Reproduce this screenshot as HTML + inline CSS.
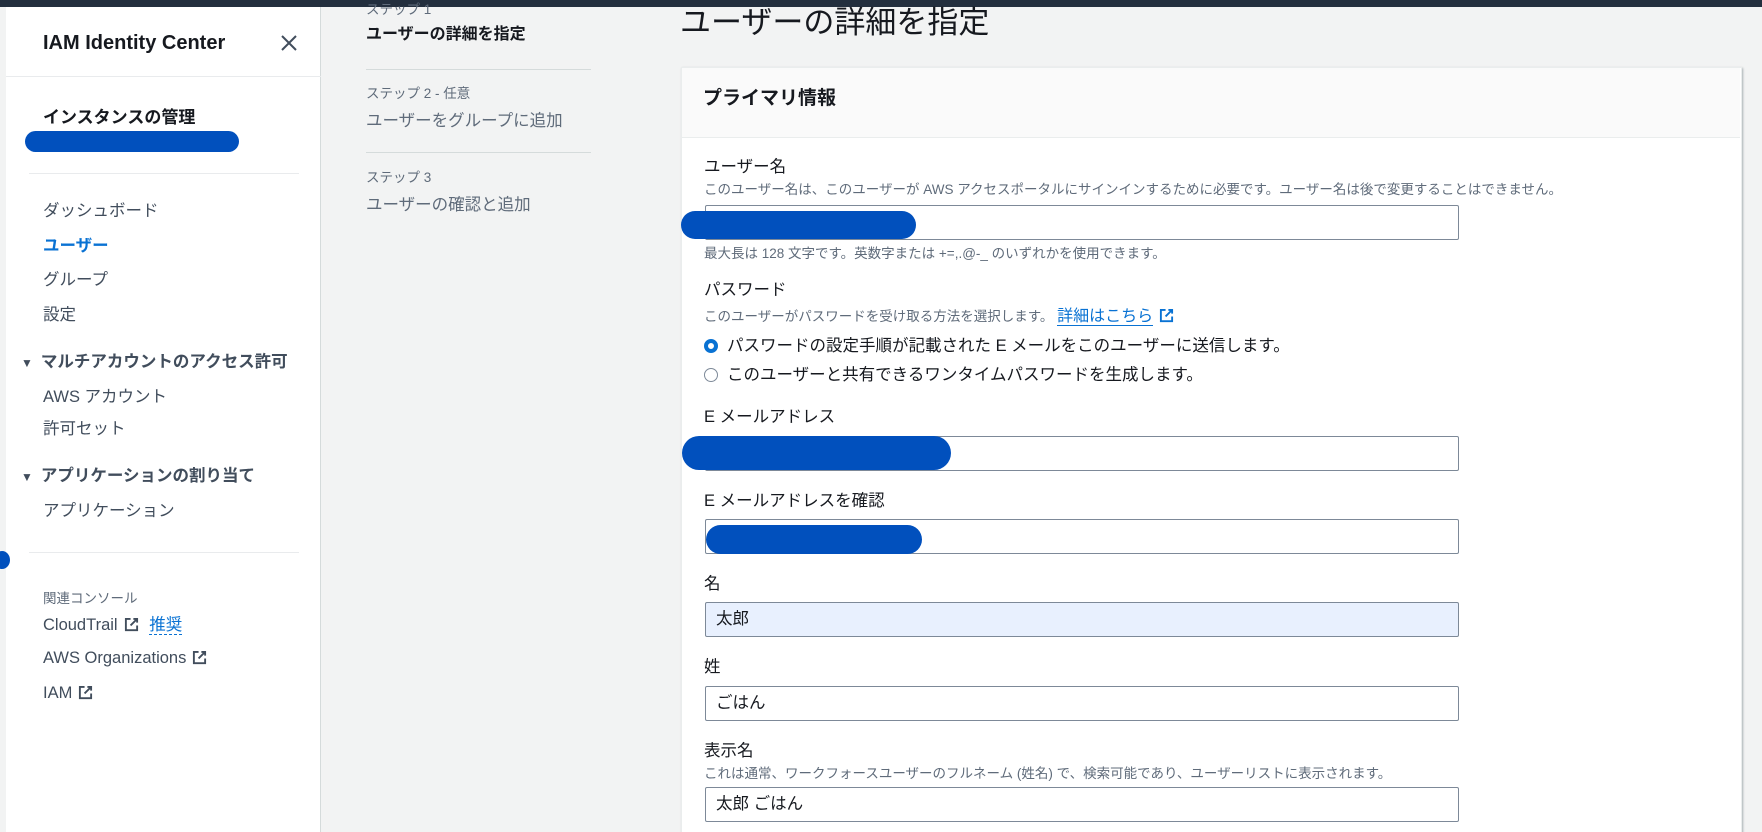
<!DOCTYPE html>
<html><head><meta charset="utf-8"><style>
*{margin:0;padding:0;box-sizing:border-box}
html,body{width:1762px;height:832px;overflow:hidden}
body{background:#f2f3f3;font-family:"Liberation Sans","Noto Sans CJK JP",sans-serif;color:#16191f}
#w{position:relative;width:1762px;height:832px;overflow:hidden}
.a{position:absolute;white-space:nowrap;line-height:20px}
.t{font-size:16.5px}
.s{font-size:13.5px;color:#5f6b7a}
.b{font-weight:bold}
.gray{color:#5f6b7a}
.hr{position:absolute;height:1px;background:#e9ebed}
.inp{position:absolute;left:705px;width:754px;height:35px;border:1px solid #7d8998;border-radius:2px;background:#fff;font-size:16.5px;padding:0 10px;line-height:33px}
.blob{position:absolute;background:#0150bd;border-radius:20px}
.ext{display:inline-block;vertical-align:-2px;margin-left:6px}
</style></head><body><div id="w">
<div style="position:absolute;left:0;top:0;width:1762px;height:7px;background:#232f3e"></div>
<div style="position:absolute;left:0;top:7px;width:6px;height:825px;background:#f2f3f3"></div>
<div style="position:absolute;left:6px;top:7px;width:315px;height:825px;background:#fff;border-right:1px solid #d5dbdb"></div>
<div class="a b" style="left:43px;top:33px;font-size:20px;line-height:20px">IAM Identity Center</div>
<svg class="a" style="left:280px;top:34px" width="18" height="18" viewBox="0 0 18 18"><path d="M2 2L16 16M16 2L2 16" stroke="#414d5c" stroke-width="2"/></svg>
<div class="hr" style="left:6px;top:76px;width:315px"></div>
<div class="a b" style="left:43px;top:108px;font-size:17px">インスタンスの管理</div>
<div class="blob" style="left:25px;top:131px;width:214px;height:21px"></div>
<div class="hr" style="left:29px;top:173px;width:270px"></div>
<div class="a t gray" style="left:43px;top:201px;color:#414d5c">ダッシュボード</div>
<div class="a t b" style="left:43px;top:236px;color:#0972d3">ユーザー</div>
<div class="a t" style="left:43px;top:270px;color:#414d5c">グループ</div>
<div class="a t" style="left:43px;top:305px;color:#414d5c">設定</div>
<div class="a b" style="left:21px;top:352px;font-size:16.5px;color:#414d5c"><span style="font-size:12px;margin-right:8px">▼</span>マルチアカウントのアクセス許可</div>
<div class="a t" style="left:43px;top:387px;color:#414d5c">AWS アカウント</div>
<div class="a t" style="left:43px;top:419px;color:#414d5c">許可セット</div>
<div class="a b" style="left:21px;top:466px;font-size:16.5px;color:#414d5c"><span style="font-size:12px;margin-right:8px">▼</span>アプリケーションの割り当て</div>
<div class="a t" style="left:43px;top:501px;color:#414d5c">アプリケーション</div>
<div class="hr" style="left:29px;top:552px;width:270px"></div>
<div style="position:absolute;left:-6px;top:551px;width:16px;height:18px;border-radius:50%;background:#0150bd"></div>
<div class="a s" style="left:43px;top:589px">関連コンソール</div>
<div class="a t" style="left:43px;top:615px;color:#414d5c">CloudTrail<svg class="ext" width="15" height="15" viewBox="0 0 16 16"><path d="M7 2H2v12h12V9M10 2h4v4M14 2L7 9" fill="none" stroke="#414d5c" stroke-width="2"/></svg> <span style="color:#0972d3;border-bottom:1px dashed #0972d3;margin-left:6px">推奨</span></div>
<div class="a t" style="left:43px;top:648px;color:#414d5c">AWS Organizations<svg class="ext" width="15" height="15" viewBox="0 0 16 16"><path d="M7 2H2v12h12V9M10 2h4v4M14 2L7 9" fill="none" stroke="#414d5c" stroke-width="2"/></svg></div>
<div class="a t" style="left:43px;top:683px;color:#414d5c">IAM<svg class="ext" width="15" height="15" viewBox="0 0 16 16"><path d="M7 2H2v12h12V9M10 2h4v4M14 2L7 9" fill="none" stroke="#414d5c" stroke-width="2"/></svg></div>

<div class="a s" style="left:366px;top:0px">ステップ 1</div>
<div class="a b" style="left:366px;top:25px;font-size:16px">ユーザーの詳細を指定</div>
<div class="hr" style="left:366px;top:69px;width:225px;background:#d5dbdb"></div>
<div class="a s" style="left:366px;top:84px">ステップ 2 - 任意</div>
<div class="a t" style="left:366px;top:111px;color:#5f6b7a">ユーザーをグループに追加</div>
<div class="hr" style="left:366px;top:152px;width:225px;background:#d5dbdb"></div>
<div class="a s" style="left:366px;top:168px">ステップ 3</div>
<div class="a t" style="left:366px;top:195px;color:#5f6b7a">ユーザーの確認と追加</div>

<div class="a" style="left:680px;top:4px;font-size:31px;line-height:38px">ユーザーの詳細を指定</div>
<div style="position:absolute;left:681px;top:67px;width:1061px;height:800px;background:#fff;border:1px solid #eaeded;box-shadow:1px 1px 2px rgba(0,28,36,.3)"></div>
<div style="position:absolute;left:682px;top:68px;width:1058px;height:70px;background:#fafafa;border-bottom:1px solid #eaeded"></div>
<div class="a b" style="left:703px;top:89px;font-size:19px">プライマリ情報</div>

<div class="a t" style="left:704px;top:157px">ユーザー名</div>
<div class="a s" style="left:704px;top:180px">このユーザー名は、このユーザーが AWS アクセスポータルにサインインするために必要です。ユーザー名は後で変更することはできません。</div>
<div class="inp" style="top:205px"></div>
<div class="blob" style="left:681px;top:211px;width:235px;height:28px"></div>
<div class="a s" style="left:704px;top:244px">最大長は 128 文字です。英数字または +=,.@-_ のいずれかを使用できます。</div>

<div class="a t" style="left:704px;top:280px">パスワード</div>
<div class="a s" style="left:704px;top:307px">このユーザーがパスワードを受け取る方法を選択します。 <span style="color:#0972d3;font-size:16px;border-bottom:1px solid #0972d3">詳細はこちら</span><svg class="ext" width="15" height="15" viewBox="0 0 16 16"><path d="M7 2H2v12h12V9M10 2h4v4M14 2L7 9" fill="none" stroke="#0972d3" stroke-width="2"/></svg></div>
<div style="position:absolute;left:704px;top:339px;width:14px;height:14px;border-radius:50%;border:4px solid #0972d3"></div>
<div class="a t" style="left:727px;top:336px">パスワードの設定手順が記載された E メールをこのユーザーに送信します。</div>
<div style="position:absolute;left:704px;top:368px;width:14px;height:14px;border-radius:50%;border:1.5px solid #7d8998"></div>
<div class="a t" style="left:727px;top:365px">このユーザーと共有できるワンタイムパスワードを生成します。</div>

<div class="a t" style="left:704px;top:407px">E メールアドレス</div>
<div class="inp" style="top:436px"></div>
<div class="blob" style="left:682px;top:436px;width:269px;height:34px;border-radius:17px"></div>
<div class="a t" style="left:704px;top:491px">E メールアドレスを確認</div>
<div class="inp" style="top:519px"></div>
<div class="blob" style="left:706px;top:525px;width:216px;height:29px"></div>
<div class="a t" style="left:704px;top:574px">名</div>
<div class="inp" style="top:602px;background:#e8f0fe">太郎</div>
<div class="a t" style="left:704px;top:657px">姓</div>
<div class="inp" style="top:686px">ごはん</div>
<div class="a t" style="left:704px;top:741px">表示名</div>
<div class="a s" style="left:704px;top:764px">これは通常、ワークフォースユーザーのフルネーム (姓名) で、検索可能であり、ユーザーリストに表示されます。</div>
<div class="inp" style="top:787px">太郎 ごはん</div>
</div></body></html>
